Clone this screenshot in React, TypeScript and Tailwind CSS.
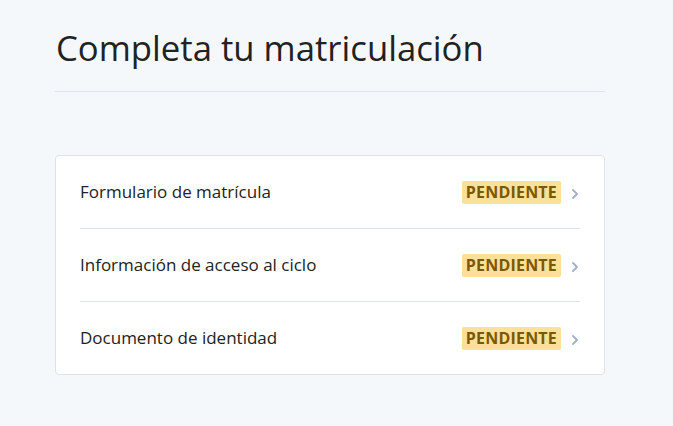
import React from "react";

const items = [
  "Formulario de matrícula",
  "Información de acceso al ciclo",
  "Documento de identidad",
];

export default function App() {
  return (
    <div
      className="min-h-[426px] w-full bg-[#f5f8fb] text-[#222]"
      style={{ fontFamily: "'Open Sans', sans-serif" }}
    >
      <div className="w-[550px] ml-[55px] pt-[25px]">
        <h1 className="text-[34.7px] leading-[46px] font-normal pl-[1px] pb-[20px] border-b border-[#dfe3ea] text-[#222]">
          Completa tu matriculación
        </h1>
        <div className="mt-[63px] bg-white border border-[#dde2ea] rounded-[4px] px-[24px]">
          {items.map((t, i) => (
            <div
              key={t}
              className={`flex items-center ${i < items.length - 1 ? "h-[73px] border-b border-[#dde2ea]" : "h-[72px]"}`}
            >
              <span className="flex-1 text-[17px] text-[#222]">{t}</span>
              <span className="bg-[#fbe09a] text-[#7a5900] font-bold text-[16px] leading-[23px] px-[4px] tracking-[0.2px] rounded-[2px]">
                PENDIENTE
              </span>
              <svg width="10" height="16" viewBox="0 0 10 16" className="ml-[9px] mt-[3px]">
                <path d="M3 4l4 4-4 4" fill="none" stroke="#9fb0c4" strokeWidth="1.8" strokeLinecap="round" strokeLinejoin="round" />
              </svg>
            </div>
          ))}
        </div>
      </div>
    </div>
  );
}
